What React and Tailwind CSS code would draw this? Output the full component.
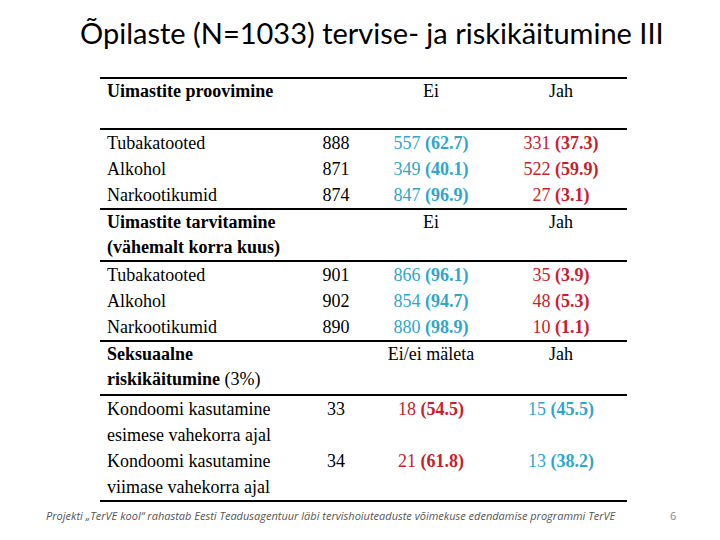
import React from 'react';

const BLUE = 'text-[#2fa6cc]';
const RED = 'text-[#c8202a]';
const COLS = 'grid grid-cols-[205px_62px_128px_132px]';

function Val({ n, p, color }) {
  return (
    <span className={color}>
      {n} <span className="font-bold">({p})</span>
    </span>
  );
}

function Header({ lines, ei, jah, h }) {
  return (
    <div className={`${COLS} border-b-2 border-black ${h}`}>
      <div className="pl-[7px] font-bold leading-[25px]">
        {lines.map((l, i) => (
          <div key={i}>{l}</div>
        ))}
      </div>
      <div />
      <div className="text-center leading-[25px]">{ei}</div>
      <div className="text-center leading-[25px]">{jah}</div>
    </div>
  );
}

function Row({ label, n, ei, jah }) {
  return (
    <div className={`${COLS} h-[26px] leading-[26px]`}>
      <div className="pl-[7px]">{label}</div>
      <div className="text-center">{n}</div>
      <div className="text-center">
        <Val n={ei[0]} p={ei[1]} color={BLUE} />
      </div>
      <div className="text-center">
        <Val n={jah[0]} p={jah[1]} color={RED} />
      </div>
    </div>
  );
}

function SexRow({ label, n, ei, jah }) {
  return (
    <div className={`${COLS} h-[52px] leading-[26px]`}>
      <div className="pl-[7px]">
        {label.map((l, i) => (
          <div key={i}>{l}</div>
        ))}
      </div>
      <div className="text-center">{n}</div>
      <div className="text-center">
        <Val n={ei[0]} p={ei[1]} color={RED} />
      </div>
      <div className="text-center">
        <Val n={jah[0]} p={jah[1]} color={BLUE} />
      </div>
    </div>
  );
}

export default function App() {
  const proovimine = [
    { label: 'Tubakatooted', n: 888, ei: [557, '62.7'], jah: [331, '37.3'] },
    { label: 'Alkohol', n: 871, ei: [349, '40.1'], jah: [522, '59.9'] },
    { label: 'Narkootikumid', n: 874, ei: [847, '96.9'], jah: [27, '3.1'] },
  ];
  const tarvitamine = [
    { label: 'Tubakatooted', n: 901, ei: [866, '96.1'], jah: [35, '3.9'] },
    { label: 'Alkohol', n: 902, ei: [854, '94.7'], jah: [48, '5.3'] },
    { label: 'Narkootikumid', n: 890, ei: [880, '98.9'], jah: [10, '1.1'] },
  ];

  return (
    <div className="w-[720px] h-[540px] bg-white overflow-hidden">
      <h1 className="pl-[80px] pt-[13px] h-[77px] text-[29px] leading-[40px] text-black font-['Lato',sans-serif]">
        Õpilaste (N=1033) tervise- ja riskikäitumine III
      </h1>

      <div className="ml-[100px] w-[527px] text-[18px] text-black font-['Liberation_Serif','Times_New_Roman',serif] border-t-2 border-black">
        <Header lines={['Uimastite proovimine']} ei="Ei" jah="Jah" h="h-[51px]" />
        <div className="border-b-2 border-black">
          {proovimine.map((r) => (
            <Row key={r.label} {...r} />
          ))}
        </div>
        <Header
          lines={['Uimastite tarvitamine', '(vähemalt korra kuus)']}
          ei="Ei"
          jah="Jah"
          h="h-[52px]"
        />
        <div className="border-b-2 border-black">
          {tarvitamine.map((r) => (
            <Row key={r.label} {...r} />
          ))}
        </div>
        <Header
          lines={['Seksuaalne', <>riskikäitumine <span className="font-normal">(3%)</span></>]}
          ei="Ei/ei mäleta"
          jah="Jah"
          h="h-[54px]"
        />
        <div className="border-b-2 border-black">
          <SexRow
            label={['Kondoomi kasutamine', 'esimese vahekorra ajal']}
            n={33}
            ei={[18, '54.5']}
            jah={[15, '45.5']}
          />
          <SexRow
            label={['Kondoomi kasutamine', 'viimase vahekorra ajal']}
            n={34}
            ei={[21, '61.8']}
            jah={[13, '38.2']}
          />
        </div>
      </div>

      <div className="flex items-center mt-[7px] h-[14px] font-['Open_Sans',sans-serif]">
        <div className="pl-[46px] w-[640px] text-[11px] italic text-[#555] whitespace-nowrap">
          Projekti „TerVE kool“ rahastab Eesti Teadusagentuur läbi tervishoiuteaduste võimekuse edendamise programmi TerVE
        </div>
        <div className="ml-[30px] text-[11px] text-[#888]">6</div>
      </div>
    </div>
  );
}
